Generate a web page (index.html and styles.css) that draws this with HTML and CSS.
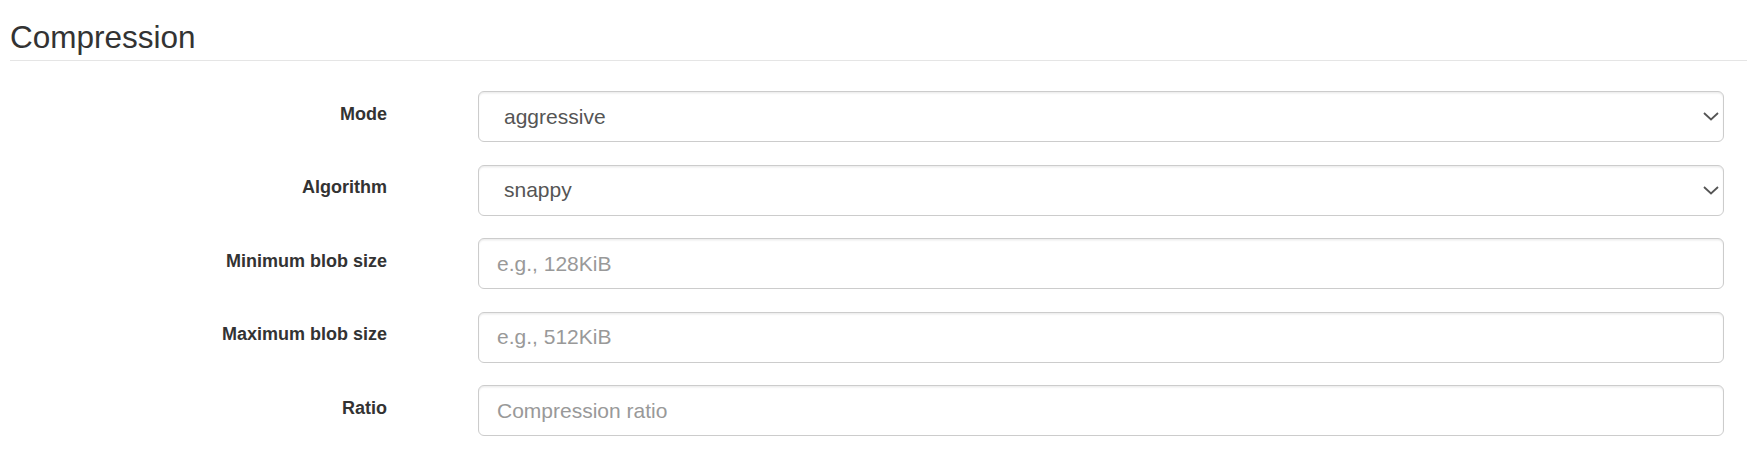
FILE: index.html
```html
<!DOCTYPE html>
<html>
<head>
<meta charset="utf-8">
<title>Compression</title>
<link rel="stylesheet" href="styles.css">
</head>
<body>
<div class="page">
  <fieldset class="section">
    <legend class="section-title">Compression</legend>
    <div class="form">
      <div class="form-group">
        <label class="control-label" for="mode">Mode</label>
        <div class="select-wrap">
          <select id="mode" class="form-control select-control">
            <option>aggressive</option>
          </select>
          <svg class="chevron" width="16" height="9" viewBox="0 0 16 9"><polyline points="1,1 8,7.5 15,1" fill="none" stroke="#555" stroke-width="1.8"/></svg>
        </div>
      </div>
      <div class="form-group">
        <label class="control-label" for="algo">Algorithm</label>
        <div class="select-wrap">
          <select id="algo" class="form-control select-control">
            <option>snappy</option>
          </select>
          <svg class="chevron" width="16" height="9" viewBox="0 0 16 9"><polyline points="1,1 8,7.5 15,1" fill="none" stroke="#555" stroke-width="1.8"/></svg>
        </div>
      </div>
      <div class="form-group">
        <label class="control-label" for="minblob">Minimum blob size</label>
        <input id="minblob" class="form-control" type="text" placeholder="e.g., 128KiB">
      </div>
      <div class="form-group">
        <label class="control-label" for="maxblob">Maximum blob size</label>
        <input id="maxblob" class="form-control" type="text" placeholder="e.g., 512KiB">
      </div>
      <div class="form-group">
        <label class="control-label" for="ratio">Ratio</label>
        <input id="ratio" class="form-control" type="text" placeholder="Compression ratio">
      </div>
    </div>
  </fieldset>
</div>
</body>
</html>
```

FILE: styles.css
```css
* { box-sizing: border-box; }
html, body { margin: 0; padding: 0; background: #fff; }
body {
  font-family: "Liberation Sans", Arial, Helvetica, sans-serif;
  color: #333;
  font-size: 21px;
  line-height: 1.42857;
}
.page {
  padding: 15px 12px 0 10px;
}
.section {
  border: 0;
  margin: 0;
  padding: 0;
  min-width: 0;
}
.section-title {
  display: block;
  width: 100%;
  padding: 0;
  margin: 0 0 30px 0;
  font-size: 31.5px;
  line-height: 45px;
  color: #333;
  border-bottom: 1px solid #e5e5e5;
}
.form {
  margin-right: 23px;
}
.form-group {
  display: grid;
  grid-template-columns: 377px 1fr;
  column-gap: 91px;
  margin-bottom: 22.5px;
}
.control-label {
  font-size: 18px;
  font-weight: bold;
  text-align: right;
  padding-top: 10.5px;
  line-height: 1.42857;
  color: #333;
}
.form-control {
  display: block;
  width: 100%;
  height: 51px;
  padding: 9px 18px;
  font-family: "Liberation Sans", Arial, Helvetica, sans-serif;
  font-size: 21px;
  line-height: 1.42857;
  color: #555;
  background: #fff;
  border: 1.5px solid #ccc;
  border-radius: 6px;
  box-shadow: inset 0 1.5px 1.5px rgba(0,0,0,.075);
  outline: none;
  margin: 0;
}
.form-control::placeholder { color: #999; opacity: 1; }
.select-wrap {
  position: relative;
}
.select-control {
  -webkit-appearance: none;
  appearance: none;
  padding-left: 25px;
  padding-right: 40px;
}
.chevron {
  position: absolute;
  right: 5px;
  top: 21px;
  pointer-events: none;
}
```
